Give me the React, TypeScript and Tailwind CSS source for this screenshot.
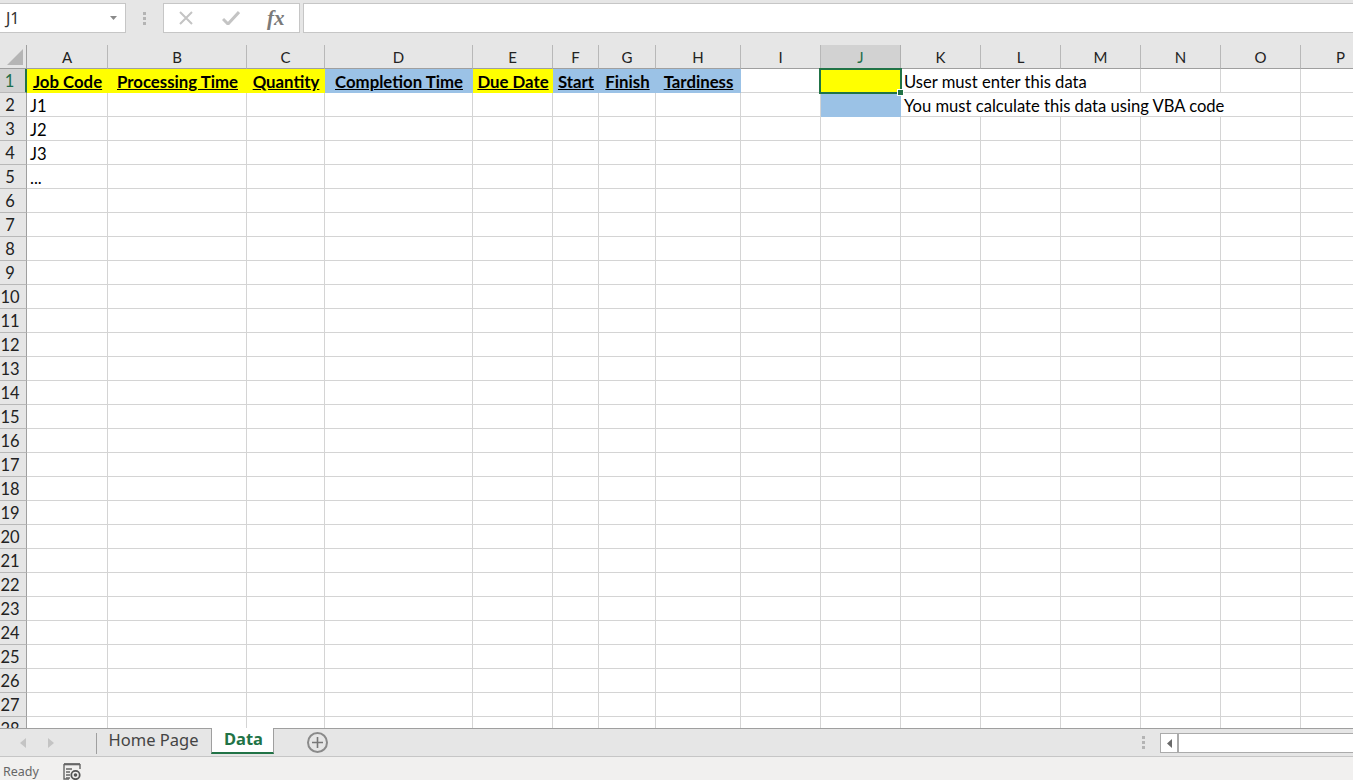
const cols: [string, number][] = [
  ["A", 81], ["B", 139], ["C", 78], ["D", 148], ["E", 80], ["F", 46], ["G", 57], ["H", 85],
  ["I", 80], ["J", 80], ["K", 80], ["L", 80], ["M", 80], ["N", 80], ["O", 80], ["P", 80],
];
const template = "27px " + cols.map((c) => c[1] + "px").join(" ");
const rows = Array.from({ length: 28 }, (_, i) => i + 1);
const heads: [string, boolean][] = [
  ["Job Code", true], ["Processing Time", true], ["Quantity", true], ["Completion Time", false],
  ["Due Date", true], ["Start", false], ["Finish", false], ["Tardiness", false],
];
const colA: Record<number, string> = { 2: "J1", 3: "J2", 4: "J3", 5: "..." };

function Dots() {
  return (
    <div className="flex flex-col gap-[2px]">
      <div className="w-[3px] h-[3px] bg-[#b4b4b4]" />
      <div className="w-[3px] h-[3px] bg-[#b4b4b4]" />
      <div className="w-[3px] h-[3px] bg-[#b4b4b4]" />
    </div>
  );
}

function Cell({ children, className = "" }: { children?: React.ReactNode; className?: string }) {
  return (
    <div className={"h-6 border-r border-b border-[#d4d4d4] bg-white pl-[3px] text-[16.6px] leading-[26px] whitespace-nowrap text-black " + className}>
      {children}
    </div>
  );
}

export default function App() {
  return (
    <div className="w-[1353px] h-[780px] overflow-hidden flex flex-col bg-[#e6e6e6] font-['Lato','Liberation_Sans',sans-serif]">
      {/* formula bar */}
      <div className="h-[45px] shrink-0 pt-[3px] flex items-start">
        <div className="w-[126px] h-[30px] bg-white border border-[#c6c6c6] border-l-0 flex items-center justify-between pl-[6px] pr-2 text-[16px] text-[#333] font-['Noto_Sans',sans-serif]">
          <span>J1</span>
          <svg width="7" height="4" viewBox="0 0 7 4"><path d="M0 0h7L3.5 4z" fill="#8a8a8a" /></svg>
        </div>
        <div className="w-[37px] h-[30px] flex items-center justify-center"><Dots /></div>
        <div className="w-[137px] h-[30px] bg-white border border-[#c6c6c6] flex items-center pl-[15px]">
          <svg width="14" height="14" viewBox="0 0 14 14" className="mr-[29px]"><path d="M1 1l12 12M13 1L1 13" stroke="#c4c4c4" strokeWidth="2" fill="none" /></svg>
          <svg width="18" height="14" viewBox="0 0 18 14" className="mr-[27px]"><path d="M1 8l5 5L17 1" stroke="#c4c4c4" strokeWidth="3" fill="none" /></svg>
          <span className="font-['Liberation_Serif',serif] italic font-bold text-[21px] text-[#7a7a7a] leading-none">fx</span>
        </div>
        <div className="w-[3px]" />
        <div className="flex-1 h-[30px] bg-white border border-[#c6c6c6] border-r-0" />
      </div>

      {/* sheet */}
      <div className="h-[683px] shrink-0 overflow-hidden bg-white">
        <div className="grid w-[1381px]" style={{ gridTemplateColumns: template }}>
          {/* header row */}
          <div className="h-6 bg-[#e6e6e6] border-r border-b border-[#9f9f9f] flex items-end justify-end pr-[3px] pb-[3px]">
            <svg width="16" height="16" viewBox="0 0 16 16"><path d="M16 0v16H0z" fill="#b5b5b5" /></svg>
          </div>
          {cols.map(([c]) => (
            <div
              key={c}
              className={
                "h-6 border-r border-b text-center text-[15px] leading-[25px] " +
                (c === "J"
                  ? "bg-[#d2d2d2] border-r-[#b0b0b0] border-b-[#9f9f9f] text-[#1f6e4a]"
                  : "bg-[#e6e6e6] border-r-[#b8b8b8] border-b-[#9f9f9f] text-[#222]")
              }
            >
              {c}
            </div>
          ))}
          {rows.map((r) => (
            <div key={r} className="contents">
              <div
                className={
                  "h-6 border-b pr-[6px] text-center text-[16.5px] leading-[25px] " +
                  (r === 1
                    ? "bg-[#d2d2d2] border-b-[#b8b8b8] border-r-2 border-r-[#217346] text-[#1f6e4a]"
                    : "bg-[#e6e6e6] border-b-[#b8b8b8] border-r border-r-[#9f9f9f] text-[#222]")
                }
              >
                {r}
              </div>
              {r === 1 ? (
                <>
                  {heads.map(([t, yellow]) => (
                    <div
                      key={t}
                      className={
                        "h-6 pt-px flex items-center justify-center font-bold underline text-[16.8px] whitespace-nowrap text-black " +
                        (yellow ? "bg-[#ffff00]" : "bg-[#9bc2e6]")
                      }
                    >
                      {t}
                    </div>
                  ))}
                  <Cell />
                  <div className="h-6 relative bg-[#ffff00]">
                    <div className="absolute left-[-2px] top-[-1px] w-[83px] h-[26px] border-2 border-[#217346]" />
                    <div className="absolute right-[-3px] bottom-[-3px] w-[5px] h-[5px] bg-[#217346] border border-white box-content" />
                  </div>
                  <Cell className="col-span-3">User must enter this data</Cell>
                  <Cell /><Cell /><Cell />
                </>
              ) : r === 2 ? (
                <>
                  <Cell>J1</Cell>
                  {cols.slice(1, 9).map(([c]) => <Cell key={c} />)}
                  <div className="h-6 bg-[#9bc2e6]" />
                  <Cell className="col-span-5">You must calculate this data using VBA code</Cell>
                  <Cell />
                </>
              ) : (
                cols.map(([c], i) => <Cell key={c}>{i === 0 ? colA[r] : null}</Cell>)
              )}
            </div>
          ))}
        </div>
      </div>

      {/* tabs */}
      <div className="h-[29px] shrink-0 border-t border-[#9f9f9f] border-b border-b-[#c6c6c6] bg-[#e6e6e6] flex items-start">
        <div className="w-[96px] h-full flex items-center pl-[20px] gap-[22px]">
          <svg width="6" height="10" viewBox="0 0 6 10"><path d="M6 0v10L0 5z" fill="#c4c4c4" /></svg>
          <svg width="6" height="10" viewBox="0 0 6 10"><path d="M0 0v10l6-5z" fill="#c4c4c4" /></svg>
        </div>
        <div className="w-px h-[21px] mt-[4px] bg-[#9f9f9f]" />
        <div className="w-[115px] h-[24px] pr-[2px] text-center text-[16.5px] leading-[21px] text-[#444] font-['Noto_Sans',sans-serif]">Home Page</div>
        <div className="w-[63px] h-[26px] -ml-px -mt-px pl-[2px] bg-white border-x border-[#9f9f9f] border-b-2 border-b-[#217346] text-center text-[16.5px] leading-[22px] font-bold text-[#217346] font-['Noto_Sans',sans-serif]">Data</div>
        <div className="ml-[33px] mt-[3px] w-[21px] h-[21px] rounded-full border-2 border-[#8a8a8a] flex items-center justify-center">
          <svg width="11" height="11" viewBox="0 0 11 11"><path d="M5.5 0v11M0 5.5h11" stroke="#777" strokeWidth="1.6" /></svg>
        </div>
        <div className="flex-1" />
        <div className="h-full flex items-center pr-[15px]"><Dots /></div>
        <div className="w-[193px] h-[20px] mt-[4px] flex bg-white border border-[#ababab] border-r-0">
          <div className="w-[18px] h-full border-r-2 border-[#ababab] flex items-center justify-center">
            <svg width="5" height="9" viewBox="0 0 5 9"><path d="M5 0v9L0 4.5z" fill="#6a6a6a" /></svg>
          </div>
        </div>
      </div>

      {/* status */}
      <div className="flex-1 bg-[#f1f0ef] flex items-start overflow-hidden text-[12.5px] text-[#666] font-['Noto_Sans',sans-serif]">
        <span className="ml-[3px] w-[60px] mt-[6px]">Ready</span>
        <svg width="18" height="17" viewBox="0 0 18 17" fill="none" className="mt-[6px]">
          <path d="M1 1.2h16" stroke="#666" strokeWidth="2.2" />
          <path d="M1 1v15h5M17 1v5" stroke="#666" strokeWidth="1.4" />
          <path d="M3 6h6M3 9h4M3 12h4M3 15h4" stroke="#666" strokeWidth="1.4" />
          <circle cx="12.5" cy="12" r="4.2" stroke="#555" strokeWidth="1.8" />
          <circle cx="12.5" cy="12" r="1.8" fill="#555" />
        </svg>
      </div>
    </div>
  );
}
